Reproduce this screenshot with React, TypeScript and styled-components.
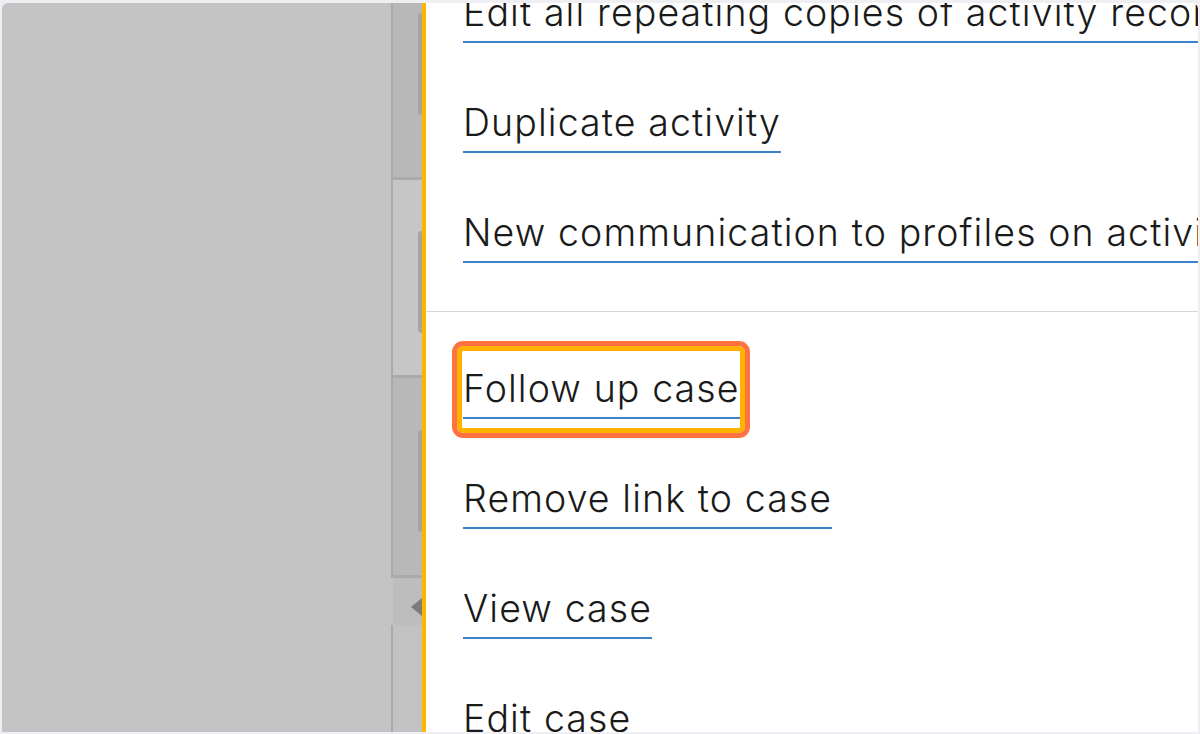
import React from "react";
import styled, { createGlobalStyle } from "styled-components";

const Global = createGlobalStyle`
  html, body { margin: 0; padding: 0; }
  body { background: #efeff3; font-family: Inter, "Noto Sans", sans-serif; }
`;

const Frame = styled.div`
  width: 1200px;
  height: 734px;
  box-sizing: border-box;
  padding: 3px 2px 2px 2px;
  background: #efeff3;
  overflow: hidden;
`;

const Screen = styled.div`
  height: 100%;
  display: flex;
  border-radius: 6px 6px 0 0;
  overflow: hidden;
`;

const Backdrop = styled.div`
  width: 386px;
  flex: none;
  background: #c4c4c4;
`;

const Strip = styled.div`
  width: 34px;
  flex: none;
  display: flex;
  flex-direction: column;
  background: #c4c4c4;
`;

const Segment = styled.div<{ $dark?: boolean; $height: number }>`
  height: ${(p) => p.$height}px;
  flex: none;
  box-sizing: border-box;
  margin-left: 3px;
  border-left: 2px solid #aaaaaa;
  border-bottom: 3px solid #aaaaaa;
  background: ${(p) => (p.$dark ? "#b8b8b8" : "#c6c6c6")};
  display: flex;
  justify-content: flex-end;
`;

const Pill = styled.div<{ $top: number }>`
  width: 4px;
  height: 102px;
  margin-top: ${(p) => p.$top}px;
  background: #a4a4a4;
  border-radius: 4px 0 0 4px;
`;

const Handle = styled.div`
  height: 47px;
  flex: none;
  display: flex;
  align-items: center;
  justify-content: flex-end;
  background: linear-gradient(to right, #c4c4c4 0 5px, #bdbdbd 5px);
`;

const Arrow = styled.div`
  width: 0;
  height: 0;
  border-top: 9px solid transparent;
  border-bottom: 9px solid transparent;
  border-right: 11px solid #7b7b7b;
  margin-top: 10px;
`;

const Rest = styled.div`
  flex: 1;
  margin-left: 3px;
  border-left: 2px solid #aaaaaa;
  background: #c2c2c2;
`;

const YellowBar = styled.div`
  width: 4px;
  flex: none;
  background: #ffb400;
`;

const Menu = styled.div`
  flex: 1;
  background: #ffffff;
  overflow: hidden;
`;

const List = styled.div`
  margin-top: -52px;
  display: flex;
  flex-direction: column;
`;

const Item = styled.div`
  height: 110px;
  box-sizing: border-box;
  padding: 0 0 18px 37px;
  display: flex;
  align-items: flex-end;
  white-space: nowrap;
`;

const Link = styled.a<{ $highlight?: boolean }>`
  position: relative;
  display: inline-block;
  font-family: Inter, "Noto Sans", sans-serif;
  font-size: 37.5px;
  font-weight: 300;
  letter-spacing: 1.1px;
  line-height: 44px;
  color: #1a1a1a;
  text-decoration: none;
  padding-bottom: 6px;
  border-bottom: 2px solid #3b82c8;
  ${(p) =>
    p.$highlight &&
    `
    &::after {
      content: "";
      position: absolute;
      left: -11px;
      right: -10px;
      top: -26px;
      bottom: -21px;
      border: 5px solid #ff7342;
      border-radius: 11px;
      box-shadow: inset 0 0 0 5px #ffb300;
      pointer-events: none;
    }
  `}
`;

const Divider = styled.div`
  height: 46px;
  box-sizing: border-box;
  padding-top: 30px;
  &::before {
    content: "";
    display: block;
    height: 1px;
    background: #d6d6d6;
  }
`;

const topItems = [
  "Edit all repeating copies of activity records",
  "Duplicate activity",
  "New communication to profiles on activity",
];

const caseItems = [
  { label: "Follow up case", highlight: true },
  { label: "Remove link to case" },
  { label: "View case" },
  { label: "Edit case" },
];

export default function App() {
  return (
    <Frame>
      <Global />
      <Screen>
        <Backdrop />
        <Strip>
          <Segment $dark $height={177}>
            <Pill $top={10} />
          </Segment>
          <Segment $height={198}>
            <Pill $top={51} />
          </Segment>
          <Segment $dark $height={200}>
            <Pill $top={52} />
          </Segment>
          <Handle>
            <Arrow />
          </Handle>
          <Rest />
        </Strip>
        <YellowBar />
        <Menu>
          <List>
            {topItems.map((t) => (
              <Item key={t}>
                <Link>{t}</Link>
              </Item>
            ))}
            <Divider />
            {caseItems.map((c) => (
              <Item key={c.label}>
                <Link $highlight={c.highlight}>{c.label}</Link>
              </Item>
            ))}
          </List>
        </Menu>
      </Screen>
    </Frame>
  );
}
